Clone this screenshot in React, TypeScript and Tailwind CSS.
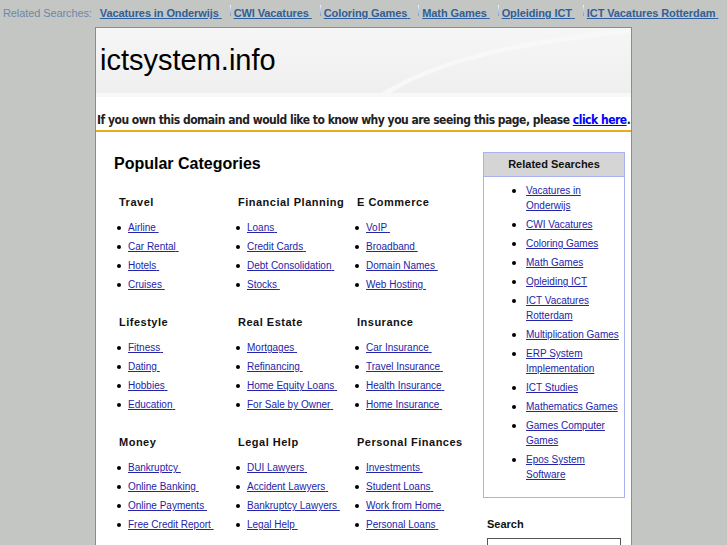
import React from "react";

const topLinks = [
  "Vacatures in Onderwijs",
  "CWI Vacatures",
  "Coloring Games",
  "Math Games",
  "Opleiding ICT",
  "ICT Vacatures Rotterdam",
];

const categories = [
  { title: "Travel", links: ["Airline", "Car Rental", "Hotels", "Cruises"] },
  {
    title: "Financial Planning",
    links: ["Loans", "Credit Cards", "Debt Consolidation", "Stocks"],
  },
  {
    title: "E Commerce",
    links: ["VoIP", "Broadband", "Domain Names", "Web Hosting"],
  },
  { title: "Lifestyle", links: ["Fitness", "Dating", "Hobbies", "Education"] },
  {
    title: "Real Estate",
    links: ["Mortgages", "Refinancing", "Home Equity Loans", "For Sale by Owner"],
  },
  {
    title: "Insurance",
    links: ["Car Insurance", "Travel Insurance", "Health Insurance", "Home Insurance"],
  },
  {
    title: "Money",
    links: ["Bankruptcy", "Online Banking", "Online Payments", "Free Credit Report"],
  },
  {
    title: "Legal Help",
    links: ["DUI Lawyers", "Accident Lawyers", "Bankruptcy Lawyers", "Legal Help"],
  },
  {
    title: "Personal Finances",
    links: ["Investments", "Student Loans", "Work from Home", "Personal Loans"],
  },
];

const related = [
  "Vacatures in Onderwijs",
  "CWI Vacatures",
  "Coloring Games",
  "Math Games",
  "Opleiding ICT",
  "ICT Vacatures Rotterdam",
  "Multiplication Games",
  "ERP System Implementation",
  "ICT Studies",
  "Mathematics Games",
  "Games Computer Games",
  "Epos System Software",
];

function Dot() {
  return <span className="mt-[7.5px] h-[4px] w-[4px] shrink-0 rounded-full bg-black" />;
}

export default function App() {
  return (
    <div className="min-h-screen bg-[#c4c6c4] font-['Liberation_Sans',Arial,sans-serif]">
      {/* top related bar */}
      <div className="flex h-[27px] items-center whitespace-nowrap pl-[3px] text-[11px] tracking-[-0.1px]">
        <span className="mr-[8px] text-[#6f86a8]">Related Searches:</span>
        {topLinks.map((l, i) => (
          <span key={l} className="flex items-center">
            {i > 0 && (
              <span className="mr-[3px] ml-[8px] -mt-[6px] h-[11px] w-px bg-gradient-to-b from-[#f4f8ff] to-[#7a9cc8]" />
            )}
            <a href="#" className="font-bold text-[#2f5f9a] underline">
              {l}
              {"\u00a0"}
            </a>
          </span>
        ))}
      </div>

      <div className="mx-auto min-h-[518px] w-[537px] border-x border-t border-[#8c8c8c] bg-white">
        {/* header */}
        <div className="relative h-[69px] overflow-hidden border-b-[4px] border-[#f8f8f8] bg-gradient-to-b from-[#f6f6f6] to-[#efefef]">
          <svg className="absolute right-0 top-0" width="260" height="65" viewBox="0 0 260 65">
            <path d="M20 65 C60 40 120 20 260 5 L260 0 C120 15 60 35 10 65 Z" fill="#f8f8f8" />
          </svg>
          <div className="relative pl-[4px] pt-[15px] text-[29px] leading-[34px] text-black">
            ictsystem.info
          </div>
        </div>

        {/* notice */}
        <div className="flex h-[35px] items-end border-b-2 border-[#e8ab1f] pb-[3px] pl-px font-['DejaVu_Sans_Condensed','DejaVu_Sans',sans-serif] text-[12px] font-bold leading-[14px] tracking-[-0.5px] whitespace-nowrap text-[#222]">
          If you own this domain and would like to know why you are seeing this page, please&nbsp;
          <a href="#" className="text-[#0000ff] underline">
            click here
          </a>
          .
        </div>

        {/* body */}
        <div className="flex pt-[22px]">
          <div className="flex-1 pl-[18px]">
            <h1 className="text-[16px] font-bold leading-[20px] text-black">Popular Categories</h1>
            <div className="mt-[21px] grid grid-cols-[119px_119px_119px] gap-y-[21px] pl-[5px]">
              {categories.map((c) => (
                <div key={c.title}>
                  <div className="text-[11px] font-bold leading-[14px] tracking-[0.5px] text-[#111] whitespace-nowrap">
                    {c.title}
                  </div>
                  <ul className="mt-[9px] -ml-[2px]">
                    {c.links.map((l) => (
                      <li key={l} className="flex gap-[7px] text-[10px] leading-[19px]">
                        <Dot />
                        <a href="#" className="whitespace-nowrap text-[#2424a8] underline">
                          {l}
                          {"\u00a0"}
                        </a>
                      </li>
                    ))}
                  </ul>
                </div>
              ))}
            </div>
          </div>

          <div className="-mt-[2px] mr-[6px] w-[142px]">
            <div className="border border-[#aab2f0] bg-white">
              <div className="flex h-[24px] items-center justify-center border-b border-[#aab2f0] bg-[#d5d5d5] text-[11px] font-bold text-[#111]">
                Related Searches
              </div>
              <ul className="flex flex-col gap-[4px] pb-[15px] pl-[28px] pr-[2px] pt-[6px]">
                {related.map((l) => (
                  <li key={l} className="flex gap-[10px] text-[10px] leading-[15px]">
                    <span className="mt-[5.5px] h-[4px] w-[4px] shrink-0 rounded-full bg-black" />
                    <a href="#" className="text-[#2424a8] underline">
                      {l}
                    </a>
                  </li>
                ))}
              </ul>
            </div>
            <div className="mt-[19px] pl-[4px] text-[11px] font-bold leading-[14px] text-[#111]">
              Search
            </div>
            <div className="ml-[4px] mt-[7px] h-[20px] w-[134px] border border-[#555]" />
          </div>
        </div>
      </div>
    </div>
  );
}
